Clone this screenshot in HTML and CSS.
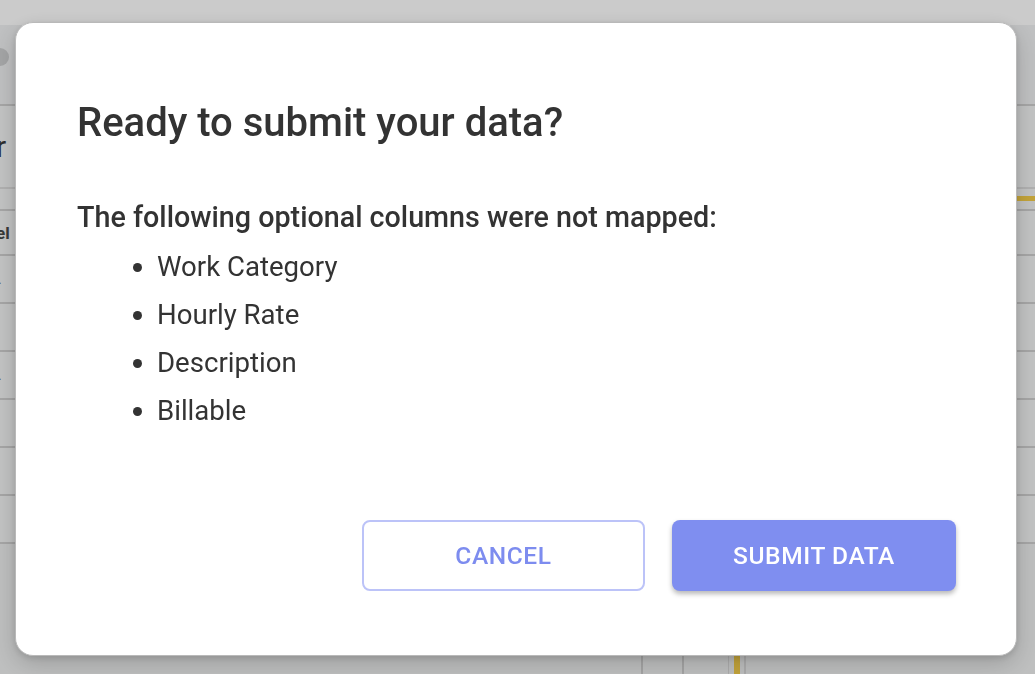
FILE: index.html
```html
<!DOCTYPE html>
<html>
<head>
<meta charset="utf-8">
<link rel="stylesheet" href="styles.css">
</head>
<body>
<div class="page">
  <div class="topbar"></div>
  <div class="hero"><span class="avatar"></span></div>
  <div class="row r-title"><span class="peek big">r</span></div>
  <div class="row r-thin"><span class="accent"></span></div>
  <div class="row r-head"><span class="peek bold">el</span></div>
  <div class="row r48"><span class="peek dot">.</span></div>
  <div class="row r48"></div>
  <div class="row r48"><span class="peek dot">.</span></div>
  <div class="row r48"></div>
  <div class="row r48"></div>
  <div class="row r48"></div>
  <div class="bottom">
    <span class="col c1"></span><span class="col c2"></span><span class="col c3"></span><span class="col c4"></span><span class="col c5"></span>
  </div>
</div>

<div class="overlay">
  <div class="modal">
    <h2 class="title">Ready to submit your data?</h2>
    <div class="content">
      <p class="lead">The following optional columns were not mapped:</p>
      <ul class="list">
        <li>Work Category</li>
        <li>Hourly Rate</li>
        <li>Description</li>
        <li>Billable</li>
      </ul>
    </div>
    <div class="actions">
      <button class="btn btn-outline">Cancel</button>
      <button class="btn btn-primary">Submit Data</button>
    </div>
  </div>
</div>
</body>
</html>
```

FILE: styles.css
```css
html, body {
  margin: 0;
  padding: 0;
  height: 100%;
  overflow: hidden;
}
body {
  font-family: Roboto, "Liberation Sans", sans-serif;
  background: #c6c7c7;
}
.page {
  display: flex;
  flex-direction: column;
  height: 100%;
}
.topbar {
  height: 25px;
  background: #d0d0d0;
  flex: none;
}
.hero {
  height: 79px;
  border-bottom: 2px solid #a9a9a9;
  display: flex;
  align-items: center;
  background: #c3c4c5;
}
.avatar {
  width: 18px;
  height: 18px;
  border-radius: 50%;
  background: #a7a8a9;
  margin-left: -9px;
  margin-top: -16px;
}
.row {
  border-bottom: 2px solid #a9a9a9;
  display: flex;
  align-items: center;
  flex: none;
  overflow: hidden;
}
.r-title { height: 81px; border-bottom-color: #b4b4b4; }
.r-thin { height: 20px; justify-content: flex-end; }
.accent {
  width: 20px;
  height: 5px;
  background: #c7a73c;
  margin-top: -2px;
}
.r-head { height: 43px; }
.r48 { height: 46px; }
.peek {
  color: #333;
  margin-left: -2px;
}
.peek.big { font-size: 30px; margin-left: -4px; color: #2f2f2f; }
.peek.bold { font-size: 17px; font-weight: 700; margin-left: -4px; color: #3a3a3a; }
.peek.dot { font-size: 14px; color: #555; margin-left: -2px; }
.bottom {
  flex: 1;
  display: flex;
  background: #c2c3c3;
}
.col { display: block; height: 100%; }
.c1 { width: 641px; border-right: 2px solid #a8a8a8; }
.c2 { width: 39px; border-right: 2px solid #a8a8a8; }
.c3 { width: 44px; border-right: 1px solid #b0b0b0; }
.c4 { width: 6px; background: #c7a73c; margin-left: 5px; }
.c5 { width: 4px; border-right: 2px solid #b0b0b0; }

.overlay {
  position: fixed;
  inset: 0;
  background: rgba(0, 0, 0, 0.02);
  padding: 22px 18px 18px 15px;
  box-sizing: border-box;
}
.modal {
  width: 1002px;
  height: 634px;
  box-sizing: border-box;
  background: #fff;
  border: 1px solid #b9b9b9;
  border-radius: 18px;
  box-shadow: 0 8px 24px rgba(0,0,0,0.18), 0 2px 6px rgba(0,0,0,0.12);
  padding: 0 60px 64px 61px;
  display: flex;
  flex-direction: column;
  color: #333;
}
.title {
  margin: 76px 0 0 0;
  font-size: 40px;
  font-weight: 500;
  line-height: 48px;
  letter-spacing: 0;
}
.content { flex: 1; }
.lead {
  margin: 53px 0 0 0;
  font-size: 28.7px;
  font-weight: 500;
  line-height: 34px;
}
.list {
  margin: 9px 0 0 0;
  padding-left: 80px;
  font-size: 27.6px;
  line-height: 48px;
}
.actions {
  display: flex;
  justify-content: flex-end;
  gap: 27px;
}
.btn {
  font-family: Roboto, "Liberation Sans", sans-serif;
  text-transform: uppercase;
  font-size: 24.5px;
  font-weight: 500;
  letter-spacing: 0.6px;
  height: 71px;
  border-radius: 8px;
  box-sizing: border-box;
  cursor: pointer;
}
.btn-outline {
  width: 283px;
  background: #fff;
  border: 2px solid #bcc3f8;
  color: #7d8cef;
}
.btn-primary {
  width: 284px;
  background: #7f8ef0;
  border: none;
  color: #fff;
  box-shadow: 0 3px 5px rgba(0,0,0,0.28);
}
```
